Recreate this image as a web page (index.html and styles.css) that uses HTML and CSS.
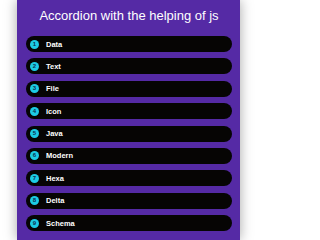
FILE: index.html
```html
<!DOCTYPE html>
<html>
<head>
<meta charset="utf-8">
<link rel="stylesheet" href="styles.css">
</head>
<body>
<div class="panel">
  <h1 class="title">Accordion with the helping of js</h1>
  <ul class="list">
    <li class="item"><span class="num">1</span><span class="label">Data</span></li>
    <li class="item"><span class="num">2</span><span class="label">Text</span></li>
    <li class="item"><span class="num">3</span><span class="label">File</span></li>
    <li class="item"><span class="num">4</span><span class="label">Icon</span></li>
    <li class="item"><span class="num">5</span><span class="label">Java</span></li>
    <li class="item"><span class="num">6</span><span class="label">Modern</span></li>
    <li class="item"><span class="num">7</span><span class="label">Hexa</span></li>
    <li class="item"><span class="num">8</span><span class="label">Delta</span></li>
    <li class="item"><span class="num">9</span><span class="label">Schema</span></li>
  </ul>
</div>
</body>
</html>
```
FILE: styles.css
```css
html, body {
  margin: 0;
  padding: 0;
  background: #ffffff;
  height: 100%;
  overflow: hidden;
}
body {
  font-family: "Liberation Sans", Arial, sans-serif;
}
.panel {
  margin-left: 17px;
  width: 223px;
  height: 100vh;
  box-sizing: border-box;
  padding: 8px 8px 0 9px;
  background: #552aa5;
  box-shadow: 0 0 12px rgba(0, 0, 0, 0.35);
}
.title {
  margin: 0 0 13px;
  font-size: 13px;
  font-weight: normal;
  line-height: 15px;
  color: #ffffff;
  text-align: center;
}
.list {
  list-style: none;
  margin: 0;
  padding: 0;
  display: flex;
  flex-direction: column;
  gap: 6.4px;
}
.item {
  height: 16px;
  border-radius: 8px;
  background: #060504;
  display: flex;
  align-items: center;
  padding-left: 4px;
}
.num {
  width: 9px;
  height: 9px;
  border-radius: 50%;
  background: #1ccbe4;
  color: #0b2f4d;
  font-size: 6px;
  font-weight: bold;
  line-height: 9px;
  text-align: center;
}
.label {
  margin-left: 7px;
  color: #ffffff;
  font-weight: bold;
  font-size: 7.5px;
}
```
